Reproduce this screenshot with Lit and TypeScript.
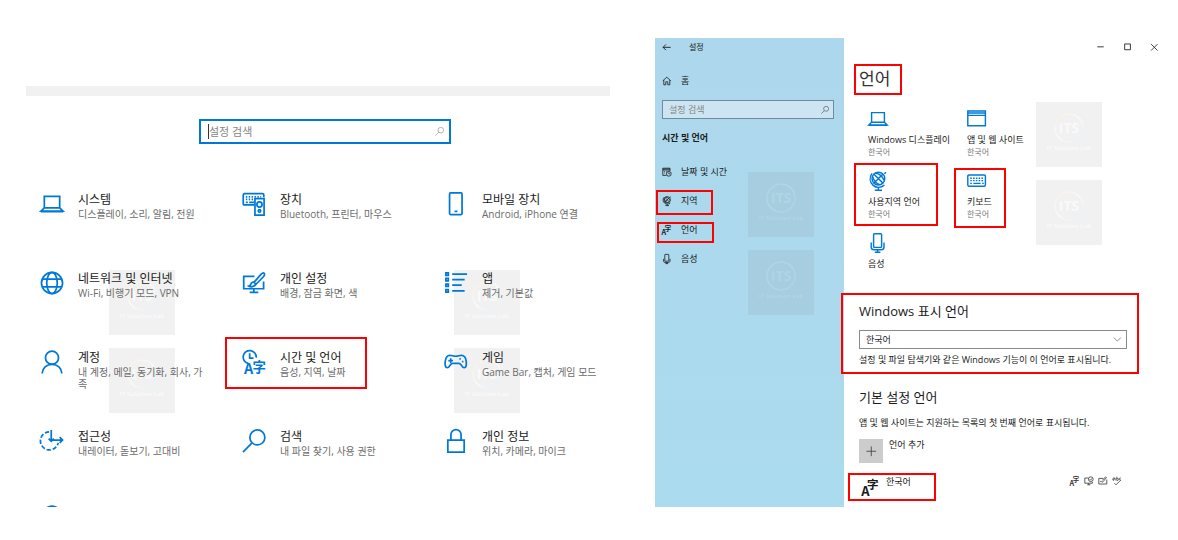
import { LitElement, html, svg, css, nothing, TemplateResult } from "lit";
import { customElement, property } from "lit/decorators.js";

const icons: Record<string, TemplateResult> = {
  laptop: svg`<path d="M4.500 4.500h16v12h-16zM4.500 16.500l-3.500 3.500h23l-3.500-3.500M1 20.500h23"/>`,
  devices: svg`<path d="M13 13.500H2.500a1.200 1.200 0 0 1-1.200-1.200V3a1.200 1.200 0 0 1 1.200-1.200h19a1.200 1.200 0 0 1 1.200 1.200v2.500"/><path stroke-dasharray="1.500 1.500" d="M4 5h16M4 7.800h8"/><path d="M4 10.700h2M7.500 10.700h5M13.500 7h9.500v17h-9.500z"/><circle cx="18.200" cy="13" r="2.700"/><circle cx="18.200" cy="19.700" r="1.300"/>`,
  phone: svg`<rect x="5.800" y="1" width="13" height="22.500" rx="1"/><path d="M11 20.200h3"/>`,
  globe: svg`<circle cx="12.500" cy="12.500" r="11"/><ellipse cx="12.500" cy="12.500" rx="5.500" ry="11"/><path d="M2.500 8.500h20M2.500 16.500h20"/>`,
  personal: svg`<path d="M13 5.500H1.800v13h20.700V11M8 22.300h9M12.300 18.500v3.500"/><path d="M23 2.300c-1-.8-2 0-3 1l-7.500 8.500 2 2L22.300 6c1-1.200 1.600-2.700.7-3.700zM12.500 11.800c-2-.4-3 .8-3.300 2-.2 1-.8 1.700-2 2 2 1.200 5.500 1 7.300-2"/>`,
  apps: svg`<path d="M2 2h2.500v2.500H2zM2 7.700h2.500v2.500H2zM2 13.600h2.500v2.500H2zM2 19.500h2.500V22H2zM8.500 3.200H24M8.500 9h13M8.500 14.800h10M8.500 20.600h13"/>`,
  person: svg`<circle cx="12.500" cy="8" r="6.800"/><path d="M2.200 24.500c.3-5.500 4.500-9.500 10.300-9.500s10 4 10.300 9.500"/>`,
  timelang: svg`<path d="M6.500 14A6.800 6.800 0 1 1 14.800 8"/><path d="M8 3.500V8.500h4"/><text x="2" y="25" font-size="15" font-weight="700" class="glyph">A</text><text x="11" y="23" font-size="14" font-weight="700" class="glyph">字</text>`,
  game: svg`<path d="M6 5.500c3 0 3 1 6.200 1s3-1 6-1c3.200 0 4.500 2.500 4.900 6 .4 3.600.2 7-2.100 7-2.700 0-2.500-4.500-5.500-4.500h-6.500c-3 0-3 4.500-5.500 4.500-2.300 0-2.600-3.400-2.200-7 .5-3.500 1.700-6 4.700-6z"/><path d="M4.500 11h5M7 8.500v5M16 9.300h1.500M18.700 12h1.500"/>`,
  access: svg`<path d="M9.500 3A9.400 9.400 0 1 0 19 14.500" stroke-dasharray="4.500 2"/><path d="M11.700 1v11M9 10l2.700 2.700L14.400 10M11.700 11.500h12M20.500 8.500l3 3-3 3"/>`,
  search: svg`<circle cx="16" cy="8.800" r="7.800"/><path d="M10.400 14.500L1 24"/>`,
  lock: svg`<path d="M4 11.500h17v12.500H4zM7.200 11.500V6a5.300 5.300 0 0 1 10.600 0v5.500"/>`,
  window: svg`<path d="M1 2.500h22v18.500H1zM1 5h22M1 8h22"/>`,
  desk: svg`<circle cx="13" cy="9.500" r="8"/><path d="M7.500 4l11 11M18.500 4l-11 11M9 2.500c6 1 9.500 5 11 9M6 7c1 5 5 9 9 10M5 3C1.500 8 2 14 6.500 18c4 3.500 10 3.300 14-.5M13 20.500V24M8.500 24h9M20.500 3.500l2-2"/>`,
  keyboard: svg`<rect x="1" y="5" width="22" height="14" rx="1.500"/><path stroke-dasharray="2 1.500" d="M4 9h17M4 12h17"/><path d="M4 15.500h2M8 15.500h9M19 15.500h2"/>`,
  mic: svg`<rect x="7" y="1" width="10" height="17" rx="1"/><path d="M4 12v5.500c0 2.500 1.500 3.500 3.500 3.500h9c2 0 3.500-1 3.500-3.500V12M12 21v3M8.500 24h7"/>`,
  back: svg`<path d="M24 12H3M11 4l-8 8 8 8"/>`,
  home: svg`<path d="M2 12L12 3l10 9M4.500 10v12h5v-7.500h5V22h5V10"/>`,
  calendar: svg`<path d="M11 21H2V3h18v7M2 7.500h18M2 5h18M5 11h2M10 11h2M5 15h2M10 15h1"/><circle cx="17" cy="17" r="6"/><path d="M17 13.500V17h3"/>`,
  lang: svg`<text x="-1" y="24" font-size="18" font-weight="700" class="glyph">A</text><text x="7" y="14" font-size="16" font-weight="700" class="glyph">字</text>`,
  min: svg`<path d="M1 12h20"/>`,
  max: svg`<path d="M2 3h18v18H2z"/>`,
  close: svg`<path d="M3 3l18 18M21 3L3 21"/>`,
  plus: svg`<path d="M12 1v22M1 12h22"/>`,
  chevron: svg`<path d="M2 7l10 10L22 7"/>`,
  display: svg`<path d="M11 5H2v13h19v-3M8 22h8M12 18v4"/><circle cx="17" cy="8" r="6"/><path d="M14 8l2.500 2.500L20 6"/>`,
  write: svg`<path d="M13 6H2v14h20V9M5 15c3-5 4 3 8-1l8-10-2-2-8 9"/>`,
  spell: svg`<path d="M6 18l4 4L22 10M2 9c0-6 6-6 6 0v2M8 7c-6-1-7 5-3 4M12 2v9c6 1 6-6 0-5M22 5c-5-2-5 6 0 5"/>`,
};

@customElement("ui-icon")
export class UiIcon extends LitElement {
  @property() name = "";
  @property({ type: Number }) size = 24;
  @property({ type: Number }) weight = 1.8;
  static styles = css`
    :host { display: inline-flex; flex: none; }
    svg { display: block; fill: none; stroke: currentColor; overflow: visible; }
    .glyph { fill: currentColor; stroke: none; font-family: "Noto Sans CJK KR", sans-serif; }
  `;
  render() {
    return html`<svg width=${this.size} height=${this.size} viewBox="0 0 25 25" stroke-width=${this.weight} aria-hidden="true">${icons[this.name]}</svg>`;
  }
}

@customElement("lab-stamp")
export class LabStamp extends LitElement {
  static styles = css`
    :host { display: block; width: 66px; height: 65px; background: rgba(120, 120, 120, 0.1); pointer-events: none; }
    svg { display: block; }
    text { font-family: "Open Sans", sans-serif; font-weight: 700; fill: #fff; fill-opacity: var(--stamp-ink, 0.6); text-anchor: middle; }
    circle { fill: none; stroke: url(#ring); stroke-opacity: var(--stamp-ink, 0.6); }
  `;
  render() {
    return html`<svg width="66" height="65" viewBox="0 0 66 65" aria-hidden="true">
      <defs><linearGradient id="ring" x1="0" y1="0" x2="1" y2="1"><stop offset="0" stop-color="#fff0d0"/><stop offset=".5" stop-color="#fff"/><stop offset="1" stop-color="#d5efff"/></linearGradient></defs>
      <circle cx="33" cy="26" r="14" stroke-width="1.500"/>
      <text x="33" y="31" font-size="14">ITS</text>
      <text x="33" y="48" font-size="6">IT Solution Lab</text>
    </svg>`;
  }
}

const categories = [
  ["laptop", "시스템", "디스플레이, 소리, 알림, 전원"],
  ["devices", "장치", "Bluetooth, 프린터, 마우스"],
  ["phone", "모바일 장치", "Android, iPhone 연결"],
  ["globe", "네트워크 및 인터넷", "Wi-Fi, 비행기 모드, VPN"],
  ["personal", "개인 설정", "배경, 잠금 화면, 색"],
  ["apps", "앱", "제거, 기본값"],
  ["person", "계정", "내 계정, 메일, 동기화, 회사, 가족"],
  ["timelang", "시간 및 언어", "음성, 지역, 날짜"],
  ["game", "게임", "Game Bar, 캡처, 게임 모드"],
  ["access", "접근성", "내레이터, 돋보기, 고대비"],
  ["search", "검색", "내 파일 찾기, 사용 권한"],
  ["lock", "개인 정보", "위치, 카메라, 마이크"],
];

const nav = [
  ["calendar", "날짜 및 시간", ""],
  ["desk", "지역", "mark-region"],
  ["lang", "언어", "mark-language"],
  ["mic", "음성", ""],
];

const tiles = [
  ["laptop", "Windows 디스플레이", "한국어", ""],
  ["window", "앱 및 웹 사이트", "한국어", ""],
  ["desk", "사용지역 언어", "한국어", "mark-locale"],
  ["keyboard", "키보드", "한국어", "mark-keyboard"],
  ["mic", "음성", "", ""],
];

const mark = (name: string) => (name ? html`<span class="mark ${name}"></span>` : nothing);

@customElement("app-root")
export class AppRoot extends LitElement {
  static styles = css`
    :host { display: block; background: #fff; color: #1a1a1a; font-family: "Open Sans", "Noto Sans CJK KR", sans-serif; }
    * { box-sizing: border-box; }
    a { color: inherit; text-decoration: none; }
    h1, h2, h3, p { margin: 0; font-weight: 400; }
    button { border: 0; padding: 0; background: none; color: inherit; font: inherit; }
    input, select { font: inherit; color: inherit; min-width: 0; outline: none; }
    .page { display: grid; grid-template-columns: 584fr 513fr; column-gap: 45px; padding: 38px 10px 33px 26px; }

    .overview { position: relative; padding-top: 48px; }
    .band { height: 10px; background: #f1f1f1; }
    .overview-body { padding: 23px 0 0 14px; }
    .search { display: flex; align-items: center; }
    .search input { flex: 1; border: 0; padding: 0; background: none; }
    .search-main { width: 252px; height: 25px; margin: 0 auto; padding: 0 5px 0 7px; border: 2px solid #0078d7; color: #999; font-size: 11px; }
    .search-main input { height: 15px; border-left: 1px solid #333; }
    .search input::placeholder { color: #858585; opacity: 1; }
    .categories { display: grid; grid-template-columns: repeat(3, minmax(0, 1fr)); grid-template-rows: repeat(3, 79px) 75px; column-gap: 38px; margin-top: 48px; padding-right: 2px; }
    .category { position: relative; z-index: 1; display: flex; gap: 14px; align-items: flex-start; }
    .category ui-icon, .peek { color: #0078d7; }
    .category h3 { font-size: 12px; line-height: 16px; white-space: nowrap; }
    .category p { font-size: 10px; line-height: 12px; color: #6b6b6b; }
    .peek { height: 3px; padding-top: 1px; overflow: hidden; }

    .mark { position: absolute; border: 2px solid #ff0000; pointer-events: none; }
    .mark-time { inset: -13px 39px 40px -17px; }
    .mark-region { inset: 4px 131px 0 1px; }
    .mark-language { inset: 7px 130px 1px 2px; }
    .mark-title { inset: -1px -12px -2px -5px; }
    .mark-locale { inset: -8px 29px 7px -14px; }
    .mark-keyboard { inset: -3px 60px 5px -13px; }
    .mark-display { inset: -9px -12px -8px -18px; }
    .mark-korean { inset: -1px 191px -1px -11px; }

    .stamp { position: absolute; }
    .stamp-a { top: 232px; left: 83px; }
    .stamp-b { top: 310px; left: 83px; }
    .stamp-c { top: 232px; left: 428px; }
    .stamp-d { top: 310px; left: 428px; }
    .stamp-e { top: 134px; left: 93px; --stamp-ink: 0.15; }
    .stamp-f { top: 212px; left: 93px; --stamp-ink: 0.15; }
    .stamp-g { top: 64px; left: 192px; }
    .stamp-h { top: 142px; left: 192px; }

    .window { display: grid; grid-template-columns: 189px minmax(0, 1fr); font-size: 9px; line-height: 12px; }
    .side { position: relative; background: linear-gradient(#add7ec, #abdbee); }
    .side-top { display: flex; align-items: center; gap: 18px; height: 18px; padding-left: 7px; font-size: 8px; }
    .side-top button { display: flex; }
    .side-link { position: relative; display: flex; align-items: center; gap: 9px; height: 29px; padding-left: 7px; }
    .home { margin-top: 10px; }
    .search-side { height: 19px; margin: 5px 10px 0 7px; padding: 0 4px 0 6px; border: 1px solid #6f8c9b; background: #cde5f2; color: #555; }
    .side h2 { margin: 12px 0 12px 7px; font-size: 9px; line-height: 14px; font-weight: 700; }
    .main { position: relative; padding: 0 41px 6px 15px; }
    .controls { display: flex; justify-content: flex-end; margin-right: -41px; height: 18px; }
    .controls button { width: 27px; display: grid; place-items: center; color: #333; }
    .title { position: relative; display: inline-block; margin-top: 9px; font-size: 17px; line-height: 28px; color: #333; }
    .tiles { display: grid; grid-template-columns: repeat(2, 99px); grid-auto-rows: 62px; padding: 16px 0 0 9px; }
    .tile { position: relative; display: flex; flex-direction: column; align-items: flex-start; white-space: nowrap; }
    .tile ui-icon { color: #0078d7; margin-bottom: 5px; }
    .tile small { font-size: 8px; color: #777; }
    .display { position: relative; margin-top: 7px; }
    .main h2 { font-size: 13px; line-height: 18px; }
    .select { position: relative; display: grid; margin: 10px 0 5px; }
    .select select { appearance: none; width: 100%; height: 19px; padding: 0 6px; border: 1px solid #8a8a8a; border-radius: 0; background: #fff; }
    .select ui-icon { position: absolute; right: 5px; top: 5px; color: #666; pointer-events: none; }
    .note { white-space: nowrap; }
    .preferred { margin-top: 22px; }
    .preferred .note { margin: 11px 0 10px; }
    .add { display: flex; gap: 6px; align-items: flex-start; }
    .add-box { width: 24px; height: 24px; display: grid; place-items: center; background: #ccc; color: #444; }
    .korean { position: relative; display: flex; align-items: flex-start; gap: 6px; margin-top: 11px; height: 26px; padding: 2px 5px 0 3px; }
    .korean ui-icon { margin-top: 3px; }
    .abilities { display: flex; gap: 4px; margin-left: auto; color: #333; }
    .korean .abilities ui-icon { margin-top: 0; }
  `;

  render() {
    return html`<div class="page">
      <section class="overview">
        <div class="band"></div>
        <div class="overview-body">
          <label class="search search-main">
            <input type="text" placeholder="설정 검색" aria-label="설정 검색" />
            <ui-icon name="search" size="9" weight="2"></ui-icon>
          </label>
          <div class="categories">
            ${categories.map(([icon, title, text]) => html`<a class="category" href="#">
              <ui-icon name=${icon}></ui-icon>
              <div><h3>${title}</h3><p>${text}</p></div>
              ${mark(icon === "timelang" ? "mark-time" : "")}
            </a>`)}
          </div>
          <div class="peek"><ui-icon name="globe"></ui-icon></div>
        </div>
        ${["a", "b", "c", "d"].map((s) => html`<lab-stamp class="stamp stamp-${s}"></lab-stamp>`)}
      </section>

      <section class="window">
        <aside class="side">
          <div class="side-top"><button aria-label="뒤로"><ui-icon name="back" size="9" weight="2.500"></ui-icon></button><span>설정</span></div>
          <a class="side-link home" href="#"><ui-icon name="home" size="10" weight="2"></ui-icon>홈</a>
          <label class="search search-side">
            <input type="text" placeholder="설정 검색" aria-label="설정 검색" />
            <ui-icon name="search" size="8" weight="2"></ui-icon>
          </label>
          <h2>시간 및 언어</h2>
          <nav>
            ${nav.map(([icon, label, m]) => html`<a class="side-link" href="#"><ui-icon name=${icon} size="10" weight="2"></ui-icon>${label}${mark(m)}</a>`)}
          </nav>
          <lab-stamp class="stamp stamp-e"></lab-stamp>
          <lab-stamp class="stamp stamp-f"></lab-stamp>
        </aside>
        <main class="main">
          <div class="controls">
            <button aria-label="최소화"><ui-icon name="min" size="8" weight="3"></ui-icon></button>
            <button aria-label="최대화"><ui-icon name="max" size="8" weight="3"></ui-icon></button>
            <button aria-label="닫기"><ui-icon name="close" size="9" weight="2.500"></ui-icon></button>
          </div>
          <h1 class="title">언어${mark("mark-title")}</h1>
          <div class="tiles">
            ${tiles.map(([icon, label, sub, m]) => html`<a class="tile" href="#">
              <ui-icon name=${icon} size="20"></ui-icon><span>${label}</span>${sub ? html`<small>${sub}</small>` : nothing}${mark(m)}
            </a>`)}
          </div>
          <section class="display">
            <h2><label for="display-language">Windows 표시 언어</label></h2>
            <div class="select">
              <select id="display-language"><option>한국어</option></select>
              <ui-icon name="chevron" size="9" weight="2"></ui-icon>
            </div>
            <p class="note">설정 및 파일 탐색기와 같은 Windows 기능이 이 언어로 표시됩니다.</p>
            ${mark("mark-display")}
          </section>
          <section class="preferred">
            <h2>기본 설정 언어</h2>
            <p class="note">앱 및 웹 사이트는 지원하는 목록의 첫 번째 언어로 표시됩니다.</p>
            <button class="add"><span class="add-box"><ui-icon name="plus" size="11" weight="2"></ui-icon></span>언어 추가</button>
            <div class="korean">
              <ui-icon name="lang" size="18"></ui-icon><span>한국어</span>
              <div class="abilities">
                ${["lang", "display", "write", "spell"].map((n) => html`<ui-icon name=${n} size="10" weight="2"></ui-icon>`)}
              </div>
              ${mark("mark-korean")}
            </div>
          </section>
          <lab-stamp class="stamp stamp-g"></lab-stamp>
          <lab-stamp class="stamp stamp-h"></lab-stamp>
        </main>
      </section>
    </div>`;
  }
}
